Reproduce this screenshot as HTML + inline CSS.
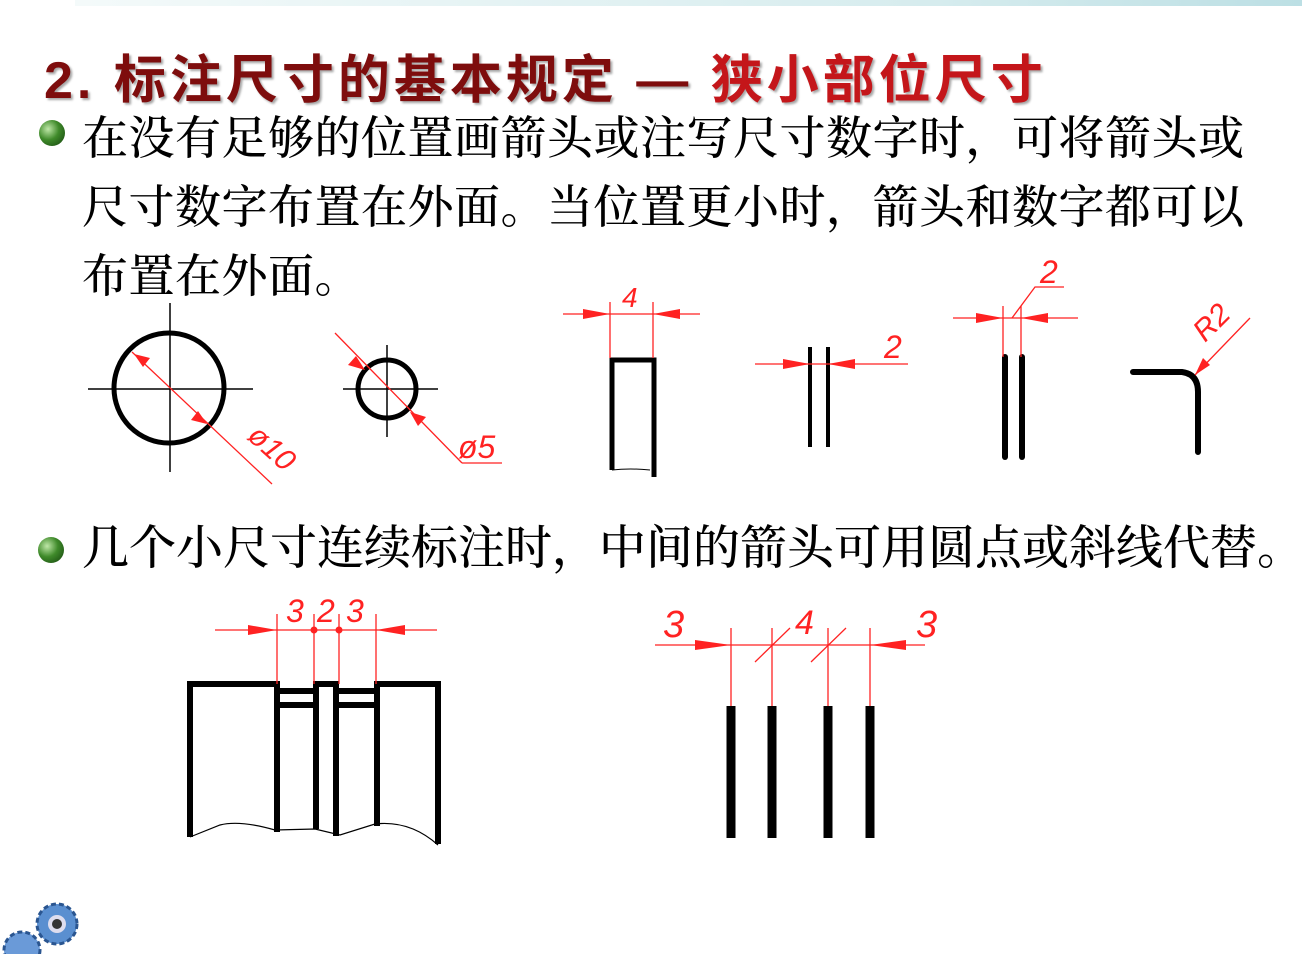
<!DOCTYPE html>
<html><head><meta charset="utf-8"><style>
html,body{margin:0;padding:0;background:#fff;width:1302px;height:954px;overflow:hidden;position:relative}
.band{position:absolute;left:75px;top:0;width:1227px;height:6px;background:linear-gradient(90deg,#f4fafa,#d6ecee 70%,#bcdfe4)}
.t{position:absolute;left:44px;top:38px;font-family:"Liberation Sans","Noto Sans CJK SC",sans-serif;font-weight:bold;font-size:52px;white-space:nowrap;text-shadow:2px 2px 2px rgba(0,0,0,.35);letter-spacing:4px}
.p{position:absolute;left:82px;font-family:"Liberation Serif","Noto Serif CJK SC",serif;font-size:46px;letter-spacing:0.5px;white-space:nowrap;color:#000;line-height:69px;font-weight:500}
.b{position:absolute;width:26px;height:26px;border-radius:50%;background:radial-gradient(circle at 35% 35%,#bfe8a8,#3f8a2a 45%,#12400c)}
</style></head><body>
<div class="band"></div>
<div class="t"><span style="color:#7e0d0d">2.&nbsp;标注尺寸的基本规定 —</span> <span style="color:#c4161a">狭小部位尺寸</span></div>
<div class="b" style="left:39px;top:120px"></div>
<div class="p" style="top:104px">在没有足够的位置画箭头或注写尺寸数字时，可将箭头或<br>尺寸数字布置在外面。当位置更小时，箭头和数字都可以<br>布置在外面。</div>
<div class="b" style="left:38px;top:537px"></div>
<div class="p" style="top:515px;font-size:47px;letter-spacing:0">几个小尺寸连续标注时，中间的箭头可用圆点或斜线代替。</div>
<svg width="1302" height="954" style="position:absolute;left:0;top:0" xmlns="http://www.w3.org/2000/svg">
<g stroke="#000" fill="none">
<line x1="88" y1="389" x2="253" y2="389" stroke-width="1.5"/>
<line x1="170" y1="303" x2="170" y2="472" stroke-width="1.5"/>
<circle cx="169" cy="388" r="55" stroke-width="5"/>
<line x1="343" y1="389" x2="438" y2="389" stroke-width="1.5"/>
<line x1="387" y1="345" x2="387" y2="437" stroke-width="1.5"/>
<circle cx="387" cy="389" r="29" stroke-width="5"/>
<path d="M612 470 V360 H654 V477" stroke-width="5"/>
<path d="M612 470 Q630 468 650 470" stroke-width="1"/>
<line x1="810" y1="347" x2="810" y2="447" stroke-width="4"/>
<line x1="828" y1="347" x2="828" y2="447" stroke-width="4"/>
<line x1="1005" y1="357" x2="1005" y2="457" stroke-width="6" stroke-linecap="round"/>
<line x1="1022" y1="357" x2="1022" y2="457" stroke-width="6" stroke-linecap="round"/>
<path d="M1133 372 H1182 Q1198 374 1198 392 V452" stroke-width="6" stroke-linecap="round"/>
<path d="M190 837 V684 H277 V691 H316 V684 H336 V691 H377 V684 H438 V844" stroke-width="6"/>
<path d="M277 684 V832 M316 684 V829 M336 684 V836 M377 684 V826 M277 705 H316 M336 705 H377" stroke-width="6"/>
<path d="M190 837 L220 825 Q240 820 275 830 L315 829 L340 835 L375 824 Q410 820 438 845" stroke-width="1.2"/>
<g stroke-width="9"><line x1="731" y1="706" x2="731" y2="838"/><line x1="772" y1="706" x2="772" y2="838"/><line x1="828" y1="706" x2="828" y2="838"/><line x1="870" y1="706" x2="870" y2="838"/></g>
</g>
<g stroke="#f22" fill="none" stroke-width="1.3">
<line x1="132" y1="352" x2="272" y2="484"/>
<line x1="335" y1="333" x2="462" y2="463"/><line x1="462" y1="463" x2="502" y2="463"/>
<line x1="563" y1="314" x2="700" y2="314"/><line x1="610" y1="302" x2="610" y2="358"/><line x1="653" y1="302" x2="653" y2="358"/>
<line x1="755" y1="364" x2="908" y2="364"/>
<line x1="953" y1="318" x2="1078" y2="318"/><line x1="1003" y1="306" x2="1003" y2="357"/><line x1="1021" y1="306" x2="1021" y2="357"/><path d="M1012 318 L1035 287 H1064"/>
<line x1="1195" y1="375" x2="1250" y2="318"/>
<line x1="215" y1="630" x2="437" y2="630"/><line x1="277" y1="614" x2="277" y2="684"/><line x1="314" y1="614" x2="314" y2="684"/><line x1="339" y1="614" x2="339" y2="684"/><line x1="376" y1="614" x2="376" y2="684"/>
<line x1="655" y1="645" x2="925" y2="645"/><line x1="731" y1="628" x2="731" y2="706"/><line x1="772" y1="628" x2="772" y2="706"/><line x1="828" y1="628" x2="828" y2="706"/><line x1="870" y1="628" x2="870" y2="706"/>
<line x1="755" y1="662" x2="790" y2="628"/><line x1="811" y1="662" x2="846" y2="628"/>
</g>
<g fill="#f22">
<polygon points="134,354 150,358 143,367"/><polygon points="207,424 191,420 198,411"/>
<polygon points="365,370 348,365 356,356"/><polygon points="410,412 426,417 418,426"/>
<polygon points="610,314 583,309 583,319"/><polygon points="653,314 680,309 680,319"/>
<polygon points="810,364 783,359 783,369"/><polygon points="828,364 855,359 855,369"/>
<polygon points="1003,318 976,313 976,323"/><polygon points="1021,318 1048,313 1048,323"/>
<polygon points="1195,375 1203,358 1210,365"/>
<polygon points="277,630 248,625 248,635"/><polygon points="376,630 405,625 405,635"/>
<circle cx="314" cy="630" r="3.5"/><circle cx="339" cy="630" r="3.5"/>
<polygon points="731,645 695,640 695,650"/><polygon points="870,645 906,640 906,650"/>
</g>
<g fill="#f22" font-family="Liberation Sans,sans-serif" font-style="italic" font-weight="normal">
<text x="246" y="438" transform="rotate(42 246 438)" font-size="30">ø10</text>
<text x="458" y="458" font-size="32">ø5</text>
<text x="622" y="307" font-size="28">4</text>
<text x="884" y="358" font-size="32">2</text>
<text x="1040" y="283" font-size="32">2</text>
<text x="1205" y="343" transform="rotate(-45 1205 343)" font-size="30">R2</text>
<text x="286" y="622" font-size="32">3</text><text x="317" y="622" font-size="32">2</text><text x="346" y="622" font-size="32">3</text>
<text x="663" y="637" font-size="38">3</text><text x="795" y="634" font-size="34">4</text><text x="916" y="637" font-size="38">3</text>
</g>
<g transform="translate(57,924)">
<circle r="20" fill="#5a8fd0" stroke="#2a5590" stroke-width="3" stroke-dasharray="5 3"/>
<circle r="9" fill="#dde"/><circle r="5" fill="#333"/>
</g>
<circle cx="22" cy="950" r="18" fill="#6a9ad8" stroke="#2a5590" stroke-width="3" stroke-dasharray="5 3"/>
</svg>
</body></html>
